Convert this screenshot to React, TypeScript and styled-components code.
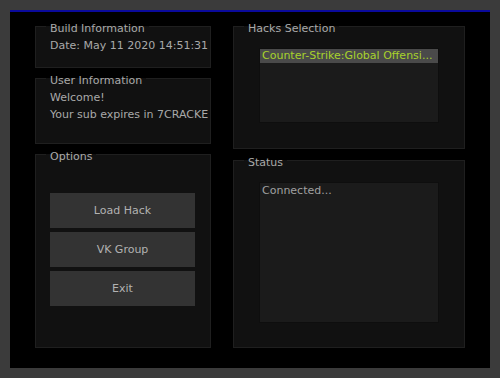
import React from 'react';
import styled, { createGlobalStyle } from 'styled-components';

const GlobalStyle = createGlobalStyle`
  html, body {
    margin: 0;
    padding: 0;
    background: #3b3b3b;
  }
  body {
    font-family: 'DejaVu Sans', Verdana, sans-serif;
    font-size: 11px;
  }
`;

const Screen = styled.div`
  width: 500px;
  height: 378px;
  padding: 10px;
  box-sizing: border-box;
`;

const Window = styled.div`
  width: 480px;
  height: 358px;
  box-sizing: border-box;
  background: #000;
  border-top: 2px solid #0a0a9c;
  display: grid;
  grid-template-columns: 176px 232px;
  column-gap: 22px;
  padding: 5px 25px 0;
`;

const Column = styled.div<{ $gap: number }>`
  display: flex;
  flex-direction: column;
  gap: ${(p) => p.$gap}px;
`;

const Group = styled.fieldset<{ $h: number }>`
  margin: 0;
  padding: 0 10px;
  height: ${(p) => p.$h}px;
  box-sizing: border-box;
  border: 1px solid #1f1f1f;
  background: #111;
  min-width: 0;
`;

const Legend = styled.legend`
  padding: 5px 4px 0;
  color: #a9a9a9;
  font-size: 11px;
  line-height: 13px;
`;

const InfoText = styled.div`
  color: #a9a9a9;
  line-height: 17px;
  padding: 2px 0 0 4px;
  white-space: nowrap;
`;

const ButtonStack = styled.div`
  display: flex;
  flex-direction: column;
  gap: 4px;
  padding: 30px 0 0 4px;
`;

const Button = styled.button`
  width: 145px;
  height: 35px;
  border: none;
  background: #333;
  color: #b2b2b2;
  font-family: inherit;
  font-size: 11px;
  padding: 0;
  cursor: pointer;
`;

const Box = styled.div<{ $h: number }>`
  margin: 13px auto 0;
  width: 180px;
  height: ${(p) => p.$h}px;
  box-sizing: border-box;
  background: #1b1b1b;
  border: 1px solid #0e0e0e;
  overflow: hidden;
`;

const ListItem = styled.div<{ $selected?: boolean }>`
  height: 14px;
  line-height: 14px;
  padding: 0 2px;
  background: ${(p) => (p.$selected ? '#4a4a4a' : 'transparent')};
  color: ${(p) => (p.$selected ? '#a8d22c' : '#a9a9a9')};
  white-space: nowrap;
`;

const LogText = styled.div`
  color: #a0a0a0;
  line-height: 14px;
  padding: 1px 2px;
`;

export default function App() {
  return (
    <Screen>
      <GlobalStyle />
      <Window>
        <Column $gap={1}>
          <Group $h={51}>
            <Legend>Build Information</Legend>
            <InfoText>Date: May 11 2020 14:51:31</InfoText>
          </Group>
          <Group $h={75}>
            <Legend>User Information</Legend>
            <InfoText>
              Welcome!
              <br />
              Your sub expires in 7CRACKE
            </InfoText>
          </Group>
          <Group $h={203}>
            <Legend>Options</Legend>
            <ButtonStack>
              <Button>Load Hack</Button>
              <Button>VK Group</Button>
              <Button>Exit</Button>
            </ButtonStack>
          </Group>
        </Column>
        <Column $gap={2}>
          <Group $h={132}>
            <Legend>Hacks Selection</Legend>
            <Box $h={75}>
              <ListItem $selected>Counter-Strike:Global Offensi...</ListItem>
            </Box>
          </Group>
          <Group $h={197}>
            <Legend>Status</Legend>
            <Box $h={141}>
              <LogText>Connected...</LogText>
            </Box>
          </Group>
        </Column>
      </Window>
    </Screen>
  );
}
